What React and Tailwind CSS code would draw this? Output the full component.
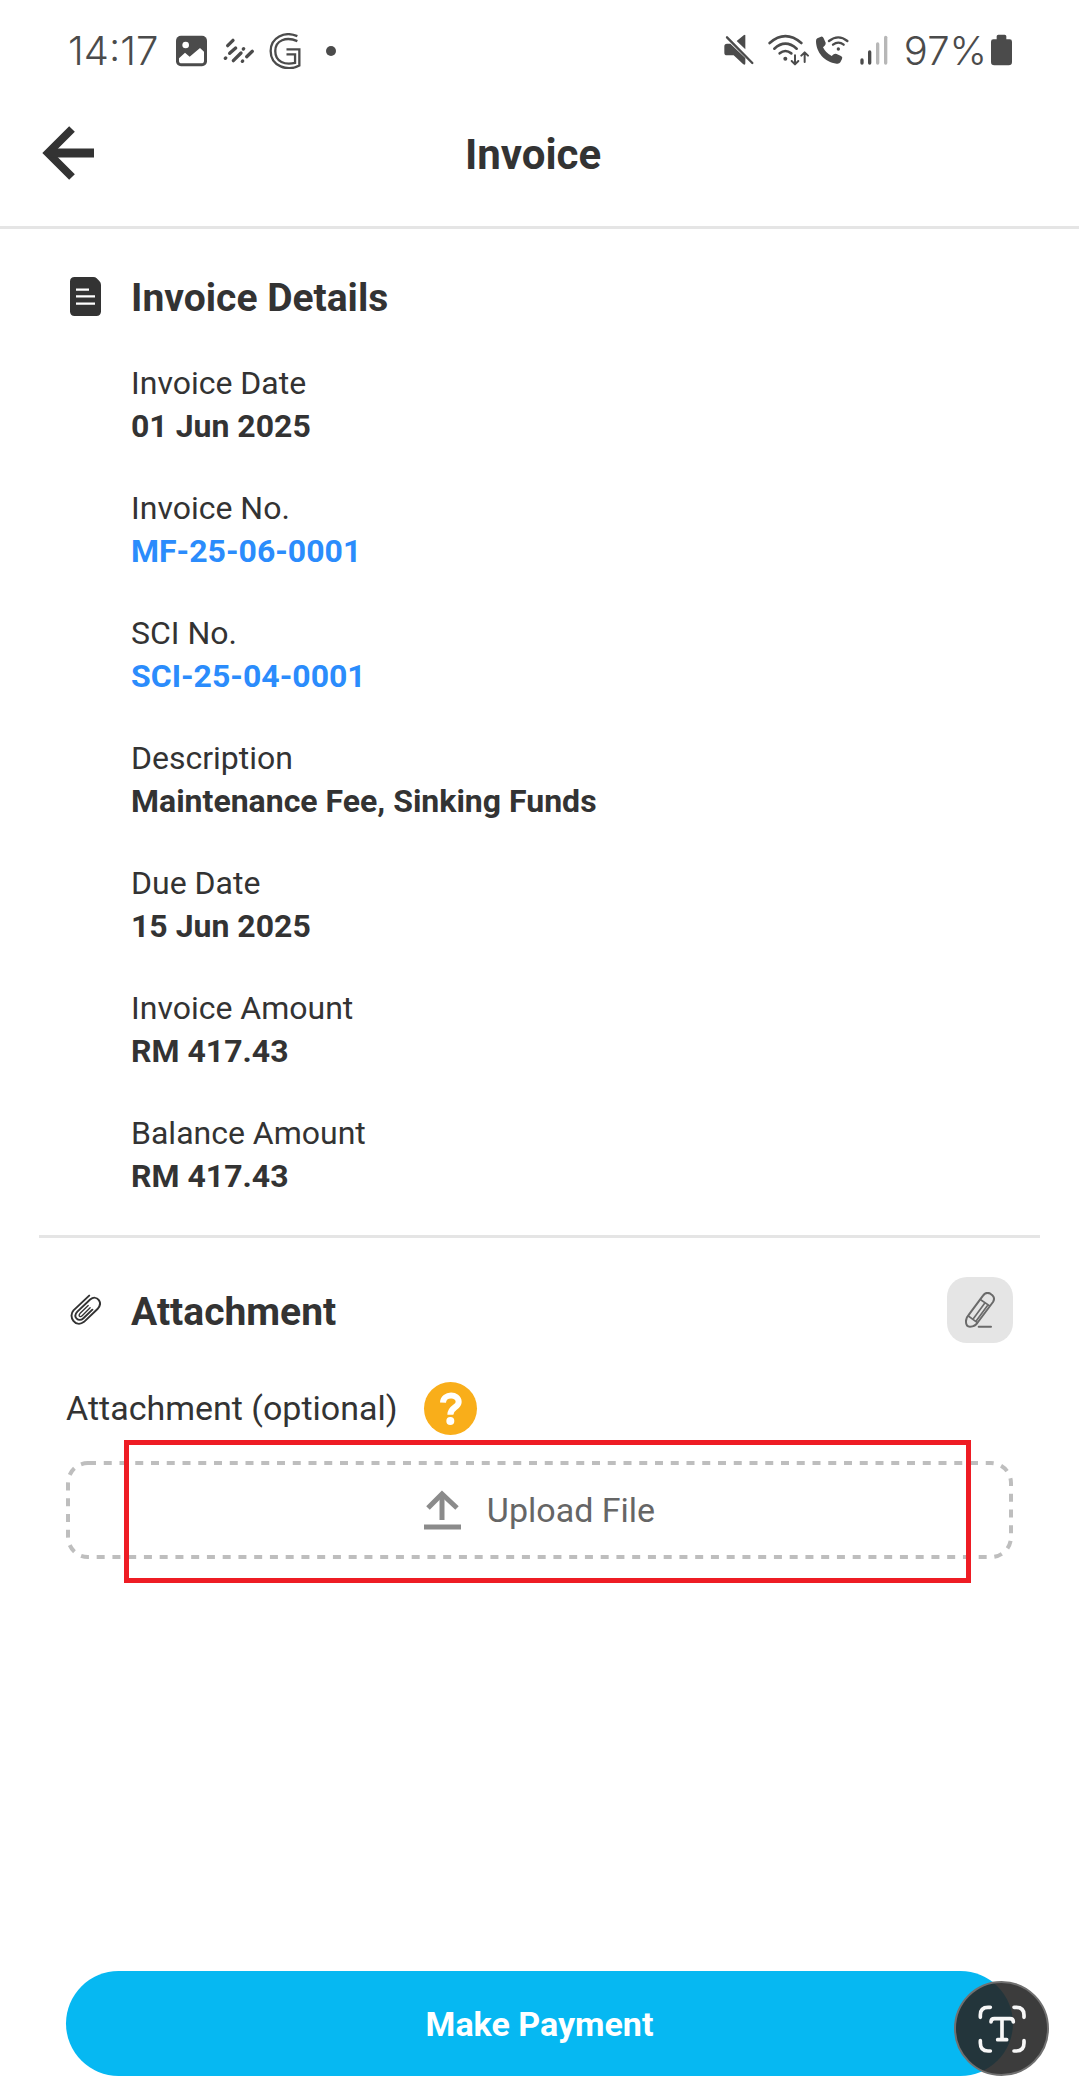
import React from "react";

const details = [
  { label: "Invoice Date", value: "01 Jun 2025" },
  { label: "Invoice No.", value: "MF-25-06-0001", href: "#invoice" },
  { label: "SCI No.", value: "SCI-25-04-0001", href: "#sci" },
  { label: "Description", value: "Maintenance Fee, Sinking Funds" },
  { label: "Due Date", value: "15 Jun 2025" },
  { label: "Invoice Amount", value: "RM 417.43" },
  { label: "Balance Amount", value: "RM 417.43" },
];

function PictureIcon() {
  return (
    <svg className="h-9 w-[31px] shrink-0" viewBox="408 70 93 108" aria-hidden="true">
      <rect x="408" y="78" width="93" height="92" rx="15" fill="#4b4b4b" />
      <circle cx="437" cy="106" r="10" fill="#fff" />
      <path d="M417 146 L435 129 L449 141 L480 115 L492 126 V153 Q492 161 484 161 H425 Q417 161 417 153 Z" fill="#fff" />
    </svg>
  );
}

function StripesIcon() {
  return (
    <svg className="h-9 w-8 shrink-0" viewBox="549 70 96 108" aria-hidden="true">
      <g stroke="#4b4b4b" strokeWidth="10" strokeLinecap="round" fill="none">
        <path d="M563 108 L579 92" />
        <path d="M569 131 L587 115" />
        <path d="M580 153 L603 130" />
        <path d="M620 141 L637 125" />
        <path d="M556 146 L557 145" />
        <path d="M610 118 L611 117" />
        <path d="M607 155 L608 154" />
      </g>
    </svg>
  );
}

function DoubleGIcon() {
  return (
    <svg className="h-9 w-8 shrink-0" viewBox="688 70 97 108" aria-hidden="true">
      <g stroke="#4b4b4b" strokeWidth="7" fill="none">
        <path d="M774 79 C735 62 693 84 693 124 C693 171 745 187 780 168 V119 H741" />
        <path d="M774 94 C740 79 707 92 707 124 C707 158 737 167 767 160 V134 H741" />
      </g>
    </svg>
  );
}

function MuteIcon() {
  return (
    <svg className="h-9 w-[30px] shrink-0" viewBox="74 70 90 108" aria-hidden="true">
      <path d="M138 75 V119 L112 94 L133 77 Q138 74 138 77 Z" fill="#4b4b4b" />
      <path d="M75 110 Q75 102 83 102 H93 L138 145 V161 Q138 168 131 163 L103 137 H83 Q75 137 75 129 Z" fill="#4b4b4b" />
      <path d="M83 83 L159 160" stroke="#4b4b4b" strokeWidth="7" strokeLinecap="round" />
    </svg>
  );
}

function WifiIcon() {
  return (
    <svg className="h-9 w-[41px] shrink-0" viewBox="205 70 123 108" aria-hidden="true">
      <g stroke="#4b4b4b" strokeWidth="8" strokeLinecap="round" strokeLinejoin="round" fill="none">
        <path d="M210 100 Q257 59 305 100" />
        <path d="M224 117 Q257 87 291 117" />
        <path d="M240 131 Q257 117 275 131" />
        <g strokeWidth="6">
          <path d="M286 137 V163 M276 154 L286 164 L296 154" />
          <path d="M315 157 V130 M305 138 L315 128 L325 138" />
        </g>
      </g>
      <circle cx="257" cy="147" r="6" fill="#4b4b4b" />
    </svg>
  );
}

function WifiCallIcon() {
  return (
    <svg className="h-9 w-[33px] shrink-0" viewBox="348 70 99 108" aria-hidden="true">
      <path
        d="M352 86 L363 81 Q369 80 371 86 L377 99 Q378 104 374 108 L369 113 Q377 130 395 139 L401 134 Q405 131 410 133 L423 139 Q429 142 426 148 L421 158 Q418 163 410 162 C373 158 348 127 348 94 Q348 88 352 86 Z"
        fill="#4b4b4b"
      />
      <g stroke="#4b4b4b" strokeWidth="7" strokeLinecap="round" fill="none">
        <path d="M387 94 Q415 72 442 94" />
        <path d="M399 105 Q415 93 431 105" />
      </g>
      <circle cx="415" cy="118" r="5" fill="#4b4b4b" />
    </svg>
  );
}

function SignalIcon() {
  return (
    <svg className="h-9 w-7 shrink-0" viewBox="481 70 84 108" aria-hidden="true">
      <g strokeWidth="10" strokeLinecap="round">
        <path d="M487 151 V160" stroke="#4b4b4b" />
        <path d="M510 127 V160" stroke="#4b4b4b" />
        <path d="M534 103 V160" stroke="#b7b7b7" />
        <path d="M558 83 V160" stroke="#b7b7b7" />
      </g>
    </svg>
  );
}

function BatteryIcon() {
  return (
    <svg className="h-9 w-[21px] shrink-0" viewBox="873 70 63 108" aria-hidden="true">
      <path
        d="M890 89 V80 Q890 75 895 75 H914 Q919 75 919 80 V89 H929 Q936 89 936 96 V157 Q936 167 926 167 H883 Q873 167 873 157 V96 Q873 89 880 89 Z"
        fill="#4b4b4b"
      />
    </svg>
  );
}

function StatusBar() {
  return (
    <div className="flex h-[102px] items-center justify-between pr-[67px] pl-[68px] font-['Inter',sans-serif] text-[40px] font-light text-[#4b4b4b]">
      <div className="flex items-center">
        <span className="mr-[18px]">14:17</span>
        <PictureIcon />
        <span className="w-4" />
        <StripesIcon />
        <span className="w-[14px]" />
        <DoubleGIcon />
        <span className="ml-[25px] size-[10px] rounded-full bg-[#4b4b4b]" />
      </div>
      <div className="flex items-center">
        <MuteIcon />
        <span className="w-[14px]" />
        <WifiIcon />
        <span className="w-[7px]" />
        <WifiCallIcon />
        <span className="w-[11px]" />
        <SignalIcon />
        <span className="mr-1 ml-4">97%</span>
        <BatteryIcon />
      </div>
    </div>
  );
}

function Header() {
  return (
    <header className="flex items-center border-b-[3px] border-[#e5e5e5] pt-6 pr-[107px] pb-[46px] pl-[42px]">
      <button type="button" aria-label="Back" className="shrink-0">
        <svg className="h-[54px] w-[52px]" viewBox="0 0 52 54" fill="none" stroke="#333" aria-hidden="true">
          <path d="M30 3 L6 27 L30 51" strokeWidth="8" />
          <path d="M7 27 H52" strokeWidth="9" />
        </svg>
      </button>
      <h1 className="flex-1 pt-1 text-center text-[42px] leading-[50px] font-bold">Invoice</h1>
    </header>
  );
}

function DocumentIcon() {
  return (
    <svg className="h-[39px] w-[31px] shrink-0" viewBox="0 0 93 117" aria-hidden="true">
      <path d="M14 0 H70 Q76 0 80 4 L88 12 Q93 17 93 23 V103 Q93 117 79 117 H14 Q0 117 0 103 V14 Q0 0 14 0 Z" fill="#333" />
      <path d="M18 38 H57 M18 58 H75 M18 80 H75" stroke="#fff" strokeWidth="7" />
    </svg>
  );
}

function ClipIcon() {
  return (
    <svg className="h-8 w-[31px] shrink-0" viewBox="15 16 97 98" fill="none" stroke="#333" strokeWidth="6" strokeLinecap="round" aria-hidden="true">
      <path d="M75 20 L26 66 C8 86 32 122 59 102 L101 62 C120 41 99 16 78 32 L38 70 C22 87 42 105 57 91 L85 64" />
      <path d="M72 51 L46 76 C40 84 47 89 53 83 L78 58" strokeWidth="4" />
    </svg>
  );
}

function PencilIcon() {
  return (
    <svg className="h-9 w-[30px]" viewBox="195 217 90 108" fill="none" stroke="#6a6a6a" strokeWidth="6" strokeLinecap="round" strokeLinejoin="round" aria-hidden="true">
      <path d="M249 228 Q258 215 271 222 L277 227 Q286 235 279 247 L234 307 Q226 321 210 321 Q198 321 198 307 Q197 295 205 287 Z" />
      <path d="M243 241 L268 258 M205 289 L231 308 M254 251 L221 296 M262 258 L229 303" strokeWidth="5" />
      <path d="M236 321 H273" />
    </svg>
  );
}

function UploadIcon() {
  return (
    <svg className="h-10 w-[37px]" viewBox="0 0 37 40" fill="none" stroke="#8b8b8b" strokeWidth="5" aria-hidden="true">
      <path d="M4 18 L18 4 L33 18" />
      <path d="M18 4 V30" />
      <path d="M0 37 H37" />
    </svg>
  );
}

function DashedOutline() {
  return (
    <svg className="pointer-events-none absolute inset-0 size-full" fill="none" aria-hidden="true">
      <rect
        x="2"
        y="2"
        rx="20"
        className="h-[calc(100%-4px)] w-[calc(100%-4px)]"
        stroke="#bebebe"
        strokeWidth="4"
        strokeDasharray="8 7.75"
      />
    </svg>
  );
}

function ScanTextIcon() {
  return (
    <svg className="size-12" viewBox="232 163 144 144" fill="none" stroke="#f7f7f7" strokeWidth="11" strokeLinecap="round" strokeLinejoin="round" aria-hidden="true">
      <path d="M239 200 V193 Q239 170 262 170 H269" />
      <path d="M340 170 H347 Q370 170 370 193 V200" />
      <path d="M239 270 V277 Q239 301 262 301 H269" />
      <path d="M340 301 H347 Q370 301 370 277 V270" />
      <path d="M271 214 Q271 204 281 204 H328 Q338 204 338 214 M304 204 V267 M291 267 H318" />
    </svg>
  );
}

export default function App() {
  return (
    <div className="flex min-h-screen flex-col bg-white font-['Roboto',sans-serif] text-[#333]">
      <StatusBar />
      <Header />
      <main>
        <section className="mx-[39px] border-b-[3px] border-[#e5e5e5] pt-[42px] pb-[37px] pl-[31px]">
          <div className="flex items-center gap-[30px]">
            <DocumentIcon />
            <h2 className="pt-1 text-[39px] leading-[46px] font-bold">Invoice Details</h2>
          </div>
          <dl className="mt-[41px] ml-[61px] flex flex-col gap-[39px] text-[32px] leading-[43px]">
            {details.map((item) => (
              <div key={item.label}>
                <dt>{item.label}</dt>
                <dd className="font-bold">
                  {item.href ? (
                    <a href={item.href} className="text-[#2b8cfc]">
                      {item.value}
                    </a>
                  ) : (
                    item.value
                  )}
                </dd>
              </div>
            ))}
          </dl>
        </section>

        <section className="px-[66px] pt-[39px]">
          <div className="flex items-center justify-between pl-1">
            <div className="flex items-center gap-[30px]">
              <ClipIcon />
              <h2 className="pt-1 text-[39px] leading-[46px] font-bold">Attachment</h2>
            </div>
            <button type="button" aria-label="Edit attachment" className="flex size-[66px] items-center justify-center rounded-[20px] bg-[#e5e5e5]">
              <PencilIcon />
            </button>
          </div>
          <div className="mt-[39px] flex items-center gap-[26px]">
            <span className="text-[34px] leading-[43px]">Attachment (optional)</span>
            <button type="button" aria-label="Help" className="size-[53px] rounded-full bg-[#f9ae1a]">
              <svg className="size-[53px]" viewBox="1152 366 159 159" fill="none" aria-hidden="true">
                <path d="M1209 428 C1210 400 1256 400 1256 426 C1256 443 1231 441 1231 464" stroke="#fff" strokeWidth="18" />
                <circle cx="1231" cy="483" r="12" fill="#fff" />
              </svg>
            </button>
          </div>
          <div className="relative mt-[26px]">
            <button type="button" className="flex h-[98px] w-full items-center justify-center gap-[26px] rounded-[22px] text-[34px] text-[#666]">
              <UploadIcon />
              Upload File
            </button>
            <DashedOutline />
            <div className="pointer-events-none absolute -top-[21px] right-[42px] -bottom-6 left-[58px] border-[5px] border-[#ee1c24]" />
          </div>
        </section>
      </main>

      <footer className="relative mt-auto px-[66px] pb-[22px]">
        <button type="button" className="h-[105px] w-full rounded-full bg-[#06b8f2] pt-0.5 text-[34px] font-bold text-white">
          Make Payment
        </button>
        <button
          type="button"
          aria-label="Extract text"
          className="absolute right-[30px] bottom-[22px] flex size-[95px] items-center justify-center rounded-full border-2 border-[#707070] bg-[#272727]/90"
        >
          <ScanTextIcon />
        </button>
      </footer>
    </div>
  );
}
